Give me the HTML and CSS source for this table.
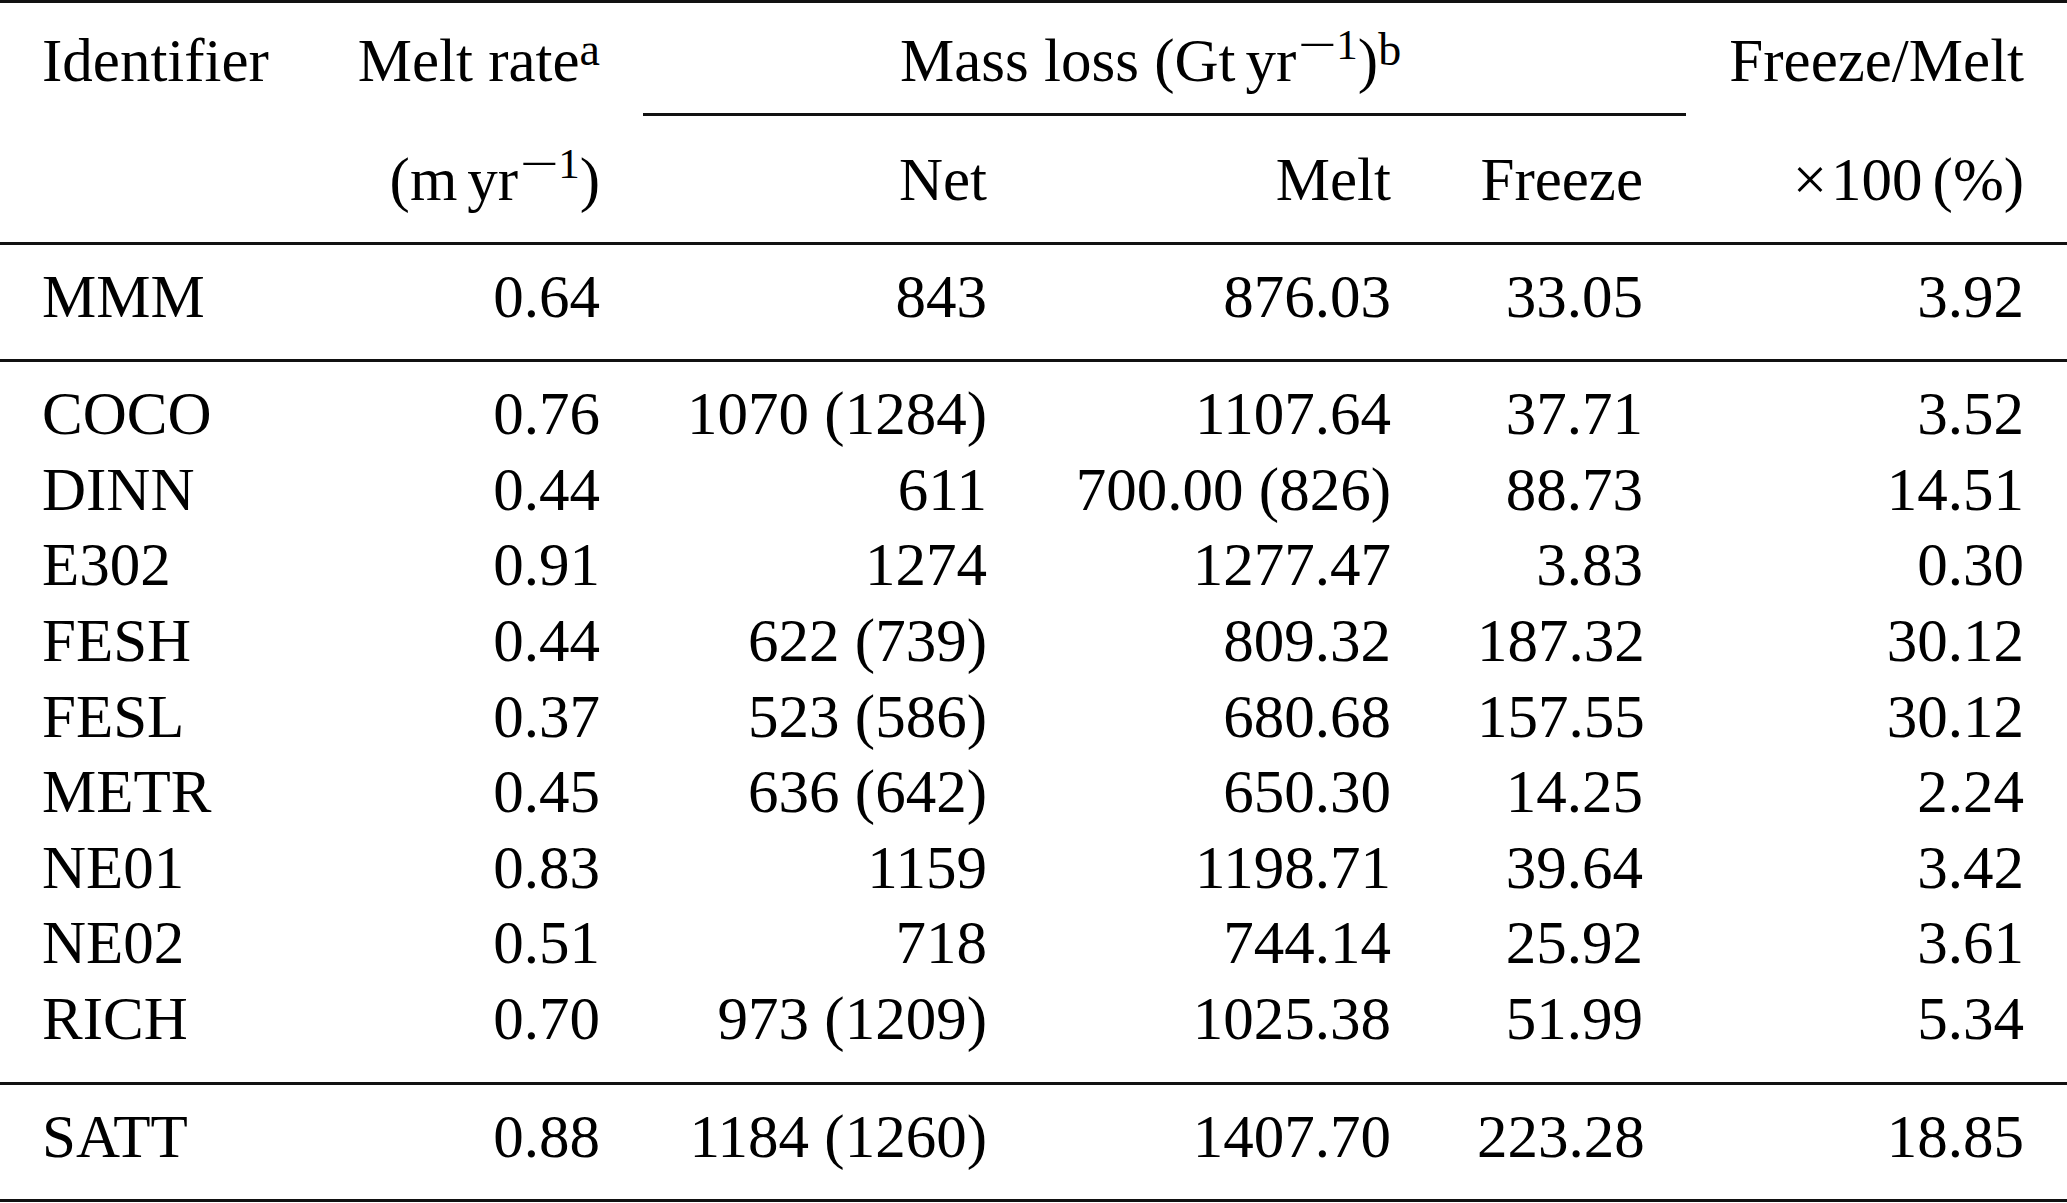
FILE: index.html
```html
<!DOCTYPE html>
<html lang="en">
<head>
<meta charset="utf-8">
<title>Mass loss table</title>
<link rel="stylesheet" href="styles.css">
</head>
<body>
<table class="tbl">
  <colgroup>
    <col class="c1"><col class="c2"><col class="c3"><col class="c4"><col class="c5"><col class="c6">
  </colgroup>
  <thead>
    <tr class="h1">
      <th class="l">Identifier</th>
      <th>Melt rate<sup class="tsup">a</sup></th>
      <th colspan="3" class="span">Mass loss (Gt<span class="thin"></span>yr<sup class="msup"><span class="mm"><span class="mg">−</span></span>1</sup>)<sup class="tsup">b</sup></th>
      <th>Freeze/Melt</th>
    </tr>
    <tr class="h2">
      <th class="l"></th>
      <th>(m<span class="thin"></span>yr<sup class="msup"><span class="mm"><span class="mg">−</span></span>1</sup>)</th>
      <th>Net</th>
      <th>Melt</th>
      <th>Freeze</th>
      <th><span class="times">×</span>100<span class="thin"></span>(%)</th>
    </tr>
  </thead>
  <tbody class="g1">
    <tr><td class="l">MMM</td><td>0.64</td><td>843</td><td>876.03</td><td>33.05</td><td>3.92</td></tr>
  </tbody>
  <tbody class="g2">
    <tr><td class="l">COCO</td><td>0.76</td><td>1070 (1284)</td><td>1107.64</td><td>37.71</td><td>3.52</td></tr>
    <tr><td class="l">DINN</td><td>0.44</td><td>611</td><td>700.00 (826)</td><td>88.73</td><td>14.51</td></tr>
    <tr><td class="l">E302</td><td>0.91</td><td>1274</td><td>1277.47</td><td>3.83</td><td>0.30</td></tr>
    <tr><td class="l">FESH</td><td>0.44</td><td>622 (739)</td><td>809.32</td><td>187.32</td><td>30.12</td></tr>
    <tr><td class="l">FESL</td><td>0.37</td><td>523 (586)</td><td>680.68</td><td>157.55</td><td>30.12</td></tr>
    <tr><td class="l">METR</td><td>0.45</td><td>636 (642)</td><td>650.30</td><td>14.25</td><td>2.24</td></tr>
    <tr><td class="l">NE01</td><td>0.83</td><td>1159</td><td>1198.71</td><td>39.64</td><td>3.42</td></tr>
    <tr><td class="l">NE02</td><td>0.51</td><td>718</td><td>744.14</td><td>25.92</td><td>3.61</td></tr>
    <tr><td class="l">RICH</td><td>0.70</td><td>973 (1209)</td><td>1025.38</td><td>51.99</td><td>5.34</td></tr>
  </tbody>
  <tbody class="g3">
    <tr><td class="l">SATT</td><td>0.88</td><td>1184 (1260)</td><td>1407.70</td><td>223.28</td><td>18.85</td></tr>
  </tbody>
</table>
</body>
</html>
```

FILE: styles.css
```css
html, body {
  margin: 0;
  padding: 0;
  background: #ffffff;
}

body {
  font-family: "Liberation Serif", "Times New Roman", serif;
  font-size: 61px;
  color: #000000;
}

.tbl {
  width: 2067px;
  table-layout: fixed;
  border-collapse: separate;
  border-spacing: 0;
  border-top: 3px solid #111111;
}

.c1 { width: 311px; }
.c2 { width: 332px; }
.c3 { width: 387px; }
.c4 { width: 404px; }
.c5 { width: 252px; }
.c6 { width: 381px; }

.tbl th,
.tbl td {
  font-weight: normal;
  text-align: right;
  vertical-align: top;
  white-space: nowrap;
  line-height: 75.6px;
  padding: 0 43px;
}

.tbl .l {
  text-align: left;
  padding-left: 42px;
}

.tbl .span {
  text-align: left;
  padding-left: 257px;
  padding-right: 0;
}

/* header row 1 */
.h1 th {
  padding-top: 19.6px;
  padding-bottom: 14.4px;
}
.h1 th.span {
  border-bottom: 3px solid #111111;
}

/* header row 2 */
.h2 th {
  padding-top: 26px;
  padding-bottom: 24.4px;
  border-bottom: 3px solid #111111;
}

/* MMM */
.g1 td {
  padding-top: 14.9px;
  padding-bottom: 23.5px;
  border-bottom: 3px solid #111111;
}

/* model rows */
.g2 tr:first-child td {
  padding-top: 14.6px;
}
.g2 tr:last-child td {
  padding-bottom: 26px;
  border-bottom: 3px solid #111111;
}

/* SATT */
.g3 td {
  padding-top: 13.6px;
  padding-bottom: 24.3px;
  border-bottom: 3px solid #111111;
}

.thin {
  display: inline-block;
  width: 10px;
}

.tsup {
  font-size: 46px;
  line-height: 0;
  vertical-align: 16px;
}

.msup {
  font-size: 43px;
  line-height: 0;
  vertical-align: 22px;
}

.mm {
  display: inline-block;
  width: 38px;
  margin-left: 2px;
  line-height: 0;
  text-align: left;
}

.mg {
  display: inline-block;
  transform: scaleX(1.6);
  transform-origin: left center;
}

.times {
  margin-right: 4px;
}
```
